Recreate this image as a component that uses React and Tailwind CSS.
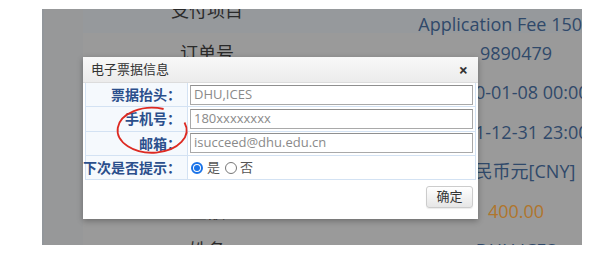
export default function App() {
  const rows = [
    { label: "订单号", value: "9890479" },
    { label: "下单时间", value: "2020-01-08 00:00:00", date: true },
    { label: "截止时间", value: "2021-12-31 23:00:00", date: true },
    { label: "币种", value: "人民币元[CNY]" },
    { label: "金额", value: "400.00", orange: true },
    { label: "姓名", value: "DHU,ICES" },
  ];

  const fields = [
    { label: "票据抬头：", value: "DHU,ICES" },
    { label: "手机号：", value: "180xxxxxxxx" },
    { label: "邮箱：", value: "isucceed@dhu.edu.cn" },
  ];

  return (
    <div className="relative w-[598px] h-[253px] bg-white overflow-hidden">
      {/* page behind the modal backdrop */}
      <div
        className="relative ml-[42px] mt-[9px] w-[540px] h-[236px] bg-[#9a9a9a] overflow-hidden flex"
        style={{ fontFamily: '"Open Sans", "Noto Sans CJK SC", sans-serif' }}
      >
        <div className="w-[41px] h-full bg-[#979899] border-l-2 border-[#92969a] shrink-0" />
        <div className="flex-1 flex flex-col">
          <div className="h-[24px] flex bg-[#96999c] shrink-0">
            <div className="w-[248px] shrink-0 text-center text-[18px] leading-[20px] mt-[-9px] text-[#2a2a2a]">
              支付项目
            </div>
            <div className="w-[370px] shrink-0 pl-[4px] text-center text-[18px] leading-[20px] mt-[5px] text-[#30496a] whitespace-nowrap">
              Application Fee 1500.00
            </div>
          </div>
          {rows.map((r) => (
            <div key={r.label} className="h-[39.5px] flex items-center shrink-0">
              <div className="w-[248px] shrink-0 text-center text-[18px] leading-[20px] text-[#2a2a2a]">
                {r.label}
              </div>
              <div
                className={`w-[370px] shrink-0 text-center text-[18px] leading-[20px] whitespace-nowrap ${
                  r.orange ? "text-[#b0752c]" : "text-[#30496a]"
                } ${r.date ? "pl-[26px]" : ""}`}
              >
                {r.value}
              </div>
            </div>
          ))}
        </div>

        {/* modal */}
        <div className="absolute left-[41px] top-[48px] w-[395px] h-[162px] bg-white shadow-[0_2px_6px_rgba(0,0,0,0.3)] flex flex-col">
          <div className="h-[26px] shrink-0 flex items-center justify-between pl-[8px] pr-[10px] bg-gradient-to-b from-[#f8f8f8] to-[#ececec] border-b border-[#dcdcdc]">
            <span className="text-[13px] text-[#333]">电子票据信息</span>
            <span className="text-[16px] font-bold text-[#333] leading-none">×</span>
          </div>
          <div className="mx-[2px] border-l border-r border-[#d3e2f3]">
            {fields.map((f) => (
              <div key={f.label} className="h-[24.3px] flex border-b border-[#d3e2f3]">
                <div className="w-[102px] shrink-0 bg-[#f5f9fd] border-r border-[#d3e2f3] flex items-center justify-end pr-[6px] text-[14px] font-bold text-[#2b4f8c]">
                  {f.label}
                </div>
                <div className="flex-1 flex items-center pl-[2px] pr-[2px]">
                  <div className="w-full h-[20px] border border-[#a9a9a9] border-t-[#8f8f8f] flex items-center pl-[3px] text-[13px] text-[#8a8a8a]">
                    {f.value}
                  </div>
                </div>
              </div>
            ))}
            <div className="h-[24.3px] flex border-b border-[#d3e2f3]">
              <div className="w-[102px] shrink-0 bg-[#f5f9fd] border-r border-[#d3e2f3] flex items-center justify-end pr-[6px] text-[14px] font-bold text-[#2b4f8c] whitespace-nowrap">
                下次是否提示：
              </div>
              <div className="flex-1 flex items-center pl-[3px] text-[13px] text-[#555]">
                <span className="w-[12px] h-[12px] rounded-full border-2 border-[#1a73e8] bg-white mr-[4px] flex items-center justify-center">
                  <span className="w-[6px] h-[6px] rounded-full bg-[#1a73e8]" />
                </span>
                <span className="mr-[5px]">是</span>
                <span className="w-[12px] h-[12px] rounded-full border border-[#777] bg-white mr-[3px]" />
                <span>否</span>
              </div>
            </div>
          </div>
          <div className="flex justify-end pr-[5px] pt-[6px]">
            <button className="w-[47px] h-[22px] rounded-[3px] border border-[#cccccc] bg-gradient-to-b from-white to-[#e6e6e6] text-[13px] text-[#333] shadow-[0_1px_1px_rgba(0,0,0,0.08)]">
              确定
            </button>
          </div>
        </div>
      </div>

      {/* hand-drawn red ellipse */}
      <svg className="absolute inset-0 pointer-events-none" width="598" height="253">
        <path
          d="M 163.6 109 A 34.5 22.5 0 1 0 184.5 122.5"
          fill="none"
          stroke="#dd2a22"
          strokeWidth="1.8"
        />
      </svg>
    </div>
  );
}
